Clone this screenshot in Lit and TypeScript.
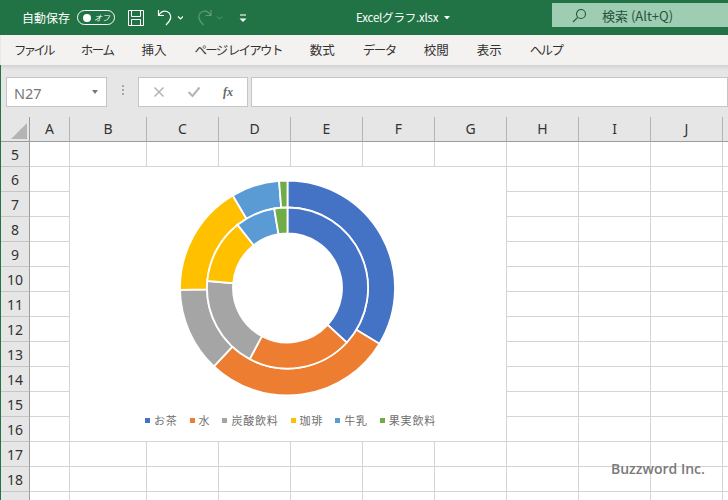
import { LitElement, html, css, svg } from "lit";
import { customElement } from "lit/decorators.js";

const COLS = ["A", "B", "C", "D", "E", "F", "G", "H", "I", "J", ""];
const ROWS = [5, 6, 7, 8, 9, 10, 11, 12, 13, 14, 15, 16, 17, 18, 19];
const COLORS = ["#4472c4", "#ed7d31", "#a5a5a5", "#ffc000", "#5b9bd5", "#70ad47"];
const LEGEND = ["お茶", "水", "炭酸飲料", "珈琲", "牛乳", "果実飲料"];
const TABS: [string, number][] = [
  ["ファイル", -2.8],
  ["ホーム", -1.5],
  ["挿入", 0],
  ["ページ レイアウト", -1.7],
  ["数式", 0],
  ["データ", -1.5],
  ["校閲", 0],
  ["表示", 0],
  ["ヘルプ", -1.7],
];
const OUTER = [0, 121.3, 223.2, 269, 329.4, 355.5, 360];
const INNER = [0, 132.6, 208, 275, 321.7, 350.5, 360];
const CX = 217.5;
const CY = 121;

function pt(r: number, a: number) {
  const t = (a * Math.PI) / 180;
  return `${(CX + r * Math.sin(t)).toFixed(2)} ${(CY - r * Math.cos(t)).toFixed(2)}`;
}
function sector(r0: number, r1: number, a0: number, a1: number) {
  const big = a1 - a0 > 180 ? 1 : 0;
  return `M${pt(r1, a0)}A${r1} ${r1} 0 ${big} 1 ${pt(r1, a1)}L${pt(r0, a1)}A${r0} ${r0} 0 ${big} 0 ${pt(r0, a0)}Z`;
}
function ring(stops: number[], r0: number, r1: number) {
  return stops.slice(0, -1).map(
    (a, i) => svg`<path d=${sector(r0, r1, a, stops[i + 1])} fill=${COLORS[i]} stroke="#fff" stroke-width="1.8"></path>`
  );
}

@customElement("app-root")
export class AppRoot extends LitElement {
  static styles = css`
    :host { display: block; width: 728px; height: 500px; overflow: hidden; background: #fff; }
    .app { height: 500px; overflow: hidden; display: flex; flex-direction: column; font-family: "Noto Sans CJK JP", sans-serif; }
    .title { height: 35px; flex: none; background: #217346; color: #fff; display: flex; align-items: center; position: relative; font-size: 12px; }
    .autosave { margin-left: 22px; width: 55px; }
    .toggle { height: 13px; border: 1.3px solid #fff; border-radius: 8px; display: flex; align-items: center; justify-content: space-between; padding: 0 4px 0 5px; box-sizing: content-box; width: 27px; }
    .dot { width: 8px; height: 8px; border-radius: 50%; background: #fff; }
    .off { font-size: 8px; font-style: italic; line-height: 13px; }
    .ic { display: block; flex: none; }
    .save { margin-left: 13px; }
    .undo { margin-left: 13px; }
    .redo { margin-left: 13px; }
    .more { margin-left: 15px; }
    .fname { position: absolute; left: 356px; top: 0; line-height: 35px; font-size: 11.5px; letter-spacing: -0.2px; white-space: nowrap; display: flex; align-items: center; gap: 6px; }
    .search { margin-left: auto; width: 176px; height: 24px; margin-top: -5px; background: #9fcdb3; color: #23553c; display: flex; align-items: center; font-size: 13px; }
    .search svg { margin-left: 20px; }
    .search span { margin-left: 15px; }
    .tabs { height: 30px; flex: none; box-sizing: border-box; background: #f3f2f1; display: flex; align-items: center; gap: 28px; padding: 0 0 2px 13px; font-size: 12.5px; color: #333; border-left: 1px solid #e8e8e8; }
    .tabs span { white-space: nowrap; }
    .fbar { height: 52px; flex: none; box-sizing: border-box; background: linear-gradient(#d2d2d2, #e6e6e6 5px); border-left: 1px solid #217346; display: flex; align-items: flex-start; padding: 12px 0 0 5px; }
    .box { background: #fff; border: 1px solid #c6c6c6; height: 30px; box-sizing: border-box; display: flex; align-items: center; }
    .name { width: 101px; padding: 1px 8px 0 7px; justify-content: space-between; font: 14.5px "Noto Sans", sans-serif; color: #777; }
    .caret { width: 0; height: 0; border: 3.5px solid transparent; border-top: 4px solid #777; border-bottom: 0; margin-top: -2px; }
    .grip { width: 31px; display: flex; flex-direction: column; align-items: center; gap: 2px; padding-top: 8px; }
    .grip i { width: 2px; height: 2px; background: #a8a8a8; display: block; }
    .btns { width: 110px; justify-content: space-around; padding: 0 3px; }
    .fx { font: italic bold 12px "Liberation Serif", serif; color: #666; }
    .input { flex: 1; margin-left: 3px; }
    .sheet { flex: none; display: grid; grid-template-columns: 29px 40px 77px repeat(9, 72px); grid-auto-rows: 25px; border-left: 1px solid #217346; width: 727px; }
    .corner, .ch, .rh { background: #e6e6e6; box-sizing: border-box; color: #333; font: 14px "Noto Sans", sans-serif; display: flex; align-items: center; justify-content: center; }
    .corner { border-bottom: 1px solid #9c9c9c; border-right: 1px solid #9c9c9c; position: relative; }
    .corner svg { position: absolute; right: 2px; bottom: 2px; }
    .ch { border-bottom: 1px solid #9c9c9c; border-right: 1px solid #b4b4b4; padding-bottom: 1px; }
    .rh { border-bottom: 1px solid #c6c6c6; border-right: 1px solid #9c9c9c; }
    .c { box-sizing: border-box; border-right: 1px solid #d4d4d4; border-bottom: 1px solid #d4d4d4; background: #fff; }
    .chart { grid-column: 3 / 9; grid-row: 3 / 14; box-sizing: border-box; border-right: 1px solid #d4d4d4; border-bottom: 1px solid #d4d4d4; background: #fff; display: flex; flex-direction: column; }
    .chart svg { display: block; flex: none; }
    .legend { display: flex; justify-content: center; gap: 12px; margin-top: 5px; font-size: 11px; letter-spacing: 0.8px; color: #6f6f6f; line-height: 16px; padding-left: 5px; }
    .li { display: flex; align-items: center; gap: 4px; white-space: nowrap; }
    .li i { width: 5px; height: 5px; display: block; }
    .wm { position: absolute; left: 611px; top: 459px; font: 600 14px "Open Sans", sans-serif; color: #7a7a7a; white-space: nowrap; }
  `;

  private cells() {
    const out: unknown[] = [];
    out.push(html`<div class="corner"><svg width="16" height="16" viewBox="0 0 16 16"><path d="M16 0V16H0Z" fill="#b4b4b4"/></svg></div>`);
    COLS.forEach((c) => out.push(html`<div class="ch">${c}</div>`));
    ROWS.forEach((r) => {
      out.push(html`<div class="rh">${r}</div>`);
      COLS.forEach((_, i) => {
        const inChart = i >= 1 && i <= 6 && r >= 6 && r <= 16;
        if (!inChart) out.push(html`<div class="c"></div>`);
      });
    });
    return out;
  }

  render() {
    return html`
      <div class="app">
        <div class="title">
          <span class="autosave">自動保存</span>
          <div class="toggle"><span class="dot"></span><span class="off">オフ</span></div>
          <svg class="ic save" width="16" height="16" viewBox="0 0 16 16" fill="none" stroke="#fff" stroke-width="1"><path d="M.5.5H15.5V15.5H.5Z"/><path d="M3.5.5V6.5H12.5V.5M3.5 15.5V9.5H12.5V15.5"/></svg>
          <svg class="ic undo" width="26" height="18" viewBox="0 0 26 18" fill="none" stroke="#fff" stroke-width="1.2"><path d="M1.5 1V6.5H7M2 6C4 2.5 7 1.5 10 2.5C14 4 15 9 12 12.5L9 16"/><path d="M21 7.5L23.5 10L26 7.5" stroke-width="1.1"/></svg>
          <svg class="ic redo" width="27" height="18" viewBox="0 0 27 18" fill="none" stroke="#5d9a7a" stroke-width="1.2"><path d="M15 1V6.5H9.5M14.5 6C12.5 2.5 9.5 1.5 6.5 2.5C2.5 4 1.5 9 4.5 12.5L7.5 16"/><path d="M21 7.5L23.5 10L26 7.5" stroke-width="1"/></svg>
          <svg class="ic more" width="10" height="10" viewBox="0 0 10 10" fill="none" stroke="#fff" stroke-width="1.1"><path d="M2 2H8"/><path d="M1.5 5.5H8.5L5 9Z" fill="#fff" stroke="none"/></svg>
          <div class="fname">Excelグラフ.xlsx <svg class="ic" width="6" height="3.5" viewBox="0 0 7 4"><path d="M0 0H7L3.5 4Z" fill="#fff"/></svg></div>
          <div class="search">
            <svg class="ic" width="15" height="15" viewBox="0 0 15 15" fill="none" stroke="#23553c" stroke-width="1.1"><circle cx="9" cy="6" r="4.5"/><path d="M5.7 9.3L1 14"/></svg>
            <span>検索 (Alt+Q)</span>
          </div>
        </div>
        <div class="tabs">
          ${TABS.map(([t, ls]) => html`<span style="letter-spacing:${ls}px">${t}</span>`)}
        </div>
        <div class="fbar">
          <div class="box name">N27<span class="caret"></span></div>
          <div class="grip"><i></i><i></i><i></i></div>
          <div class="box btns">
            <svg class="ic" width="12" height="12" viewBox="0 0 12 12" fill="none" stroke="#b4b4b4" stroke-width="1.5"><path d="M1.5 1.5L10.5 10.5M10.5 1.5L1.5 10.5"/></svg>
            <svg class="ic" width="14" height="12" viewBox="0 0 14 12" fill="none" stroke="#b4b4b4" stroke-width="2"><path d="M1.5 6L5.5 10L12.5 1.5"/></svg>
            <span class="fx">fx</span>
          </div>
          <div class="box input"></div>
        </div>
        <div class="sheet">
          <div class="chart">
            <svg width="435" height="240" viewBox="0 0 435 240">
              ${ring(OUTER, 80.5, 107.5)}
              ${ring(INNER, 54.5, 80.5)}
            </svg>
            <div class="legend">
              ${LEGEND.map((l, i) => html`<span class="li"><i style="background:${COLORS[i]}"></i>${l}</span>`)}
            </div>
          </div>
          ${this.cells()}
        </div>
        <div class="wm">Buzzword Inc.</div>
      </div>
    `;
  }
}
